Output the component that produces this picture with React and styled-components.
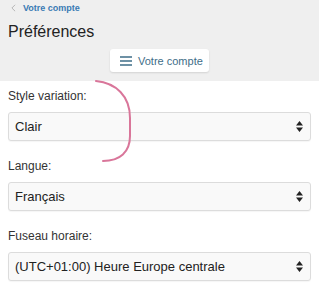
import React from "react";
import styled, { createGlobalStyle } from "styled-components";

const GlobalStyle = createGlobalStyle`
  html, body {
    margin: 0;
    padding: 0;
    background: #ffffff;
    font-family: "Liberation Sans", Arial, sans-serif;
    color: #333333;
  }
`;

const fields = [
  { label: "Style variation:", value: "Clair" },
  { label: "Langue:", value: "Français" },
  { label: "Fuseau horaire:", value: "(UTC+01:00) Heure Europe centrale" },
];

const App = () => {
  return (
    <Page>
      <GlobalStyle />
      <Header>
        <BackLink>
          <Chevron viewBox="0 0 6 10">
            <path d="M5 1 L1 5 L5 9" fill="none" stroke="#b5b5b5" strokeWidth="1.2" />
          </Chevron>
          <BackText>Votre compte</BackText>
        </BackLink>
        <Title>Préférences</Title>
        <ButtonRow>
          <MenuButton>
            <svg width="12" height="10" viewBox="0 0 12 10">
              <path d="M0 1 H12 M0 5 H12 M0 9 H12" stroke="#3e6d88" strokeWidth="1.5" />
            </svg>
            Votre compte
          </MenuButton>
        </ButtonRow>
      </Header>
      <Content>
        {fields.map((field) => (
          <Field key={field.label}>
            <Label>{field.label}</Label>
            <Select>
              <span>{field.value}</span>
              <svg width="7" height="11" viewBox="0 0 7 11">
                <path d="M3.5 0 L7 4.5 H0 Z M3.5 11 L7 6.5 H0 Z" fill="#222" />
              </svg>
            </Select>
          </Field>
        ))}
        <Scribble viewBox="0 0 50 90">
          <path
            d="M4 1 C 24 3, 38 16, 38 38 L 38 56 C 38 72, 28 81, 11 81"
            fill="none"
            stroke="#d9769a"
            strokeWidth="2"
            strokeLinecap="round"
          />
        </Scribble>
      </Content>
    </Page>
  );
};

const Page = styled.div`
  width: 319px;
  height: 300px;
  overflow: hidden;
`;

const Header = styled.div`
  background: #efefef;
  padding: 3px 8px 9px;
  height: 69px;
`;

const BackLink = styled.div`
  display: flex;
  align-items: center;
  gap: 7px;
  padding-left: 3px;
  height: 9px;
`;

const Chevron = styled.svg`
  width: 5px;
  height: 8px;
`;

const BackText = styled.span`
  font-size: 9px;
  font-weight: bold;
  color: #3a7bb4;
`;

const Title = styled.h1`
  margin: 10px 0 0;
  font-size: 16px;
  font-weight: normal;
  line-height: 19px;
  color: #222;
`;

const ButtonRow = styled.div`
  display: flex;
  justify-content: center;
  margin-top: 8px;
`;

const MenuButton = styled.div`
  display: flex;
  align-items: center;
  gap: 6px;
  height: 23px;
  width: 99px;
  box-sizing: border-box;
  padding-left: 10px;
  background: #ffffff;
  border-radius: 3px;
  box-shadow: 0 1px 2px rgba(0, 0, 0, 0.12);
  font-size: 11px;
  color: #3e6d88;
`;

const Content = styled.div`
  position: relative;
  padding: 5px 8px 0;
  display: flex;
  flex-direction: column;
  gap: 15px;
`;

const Field = styled.div`
  display: flex;
  flex-direction: column;
  gap: 6px;
`;

const Label = styled.div`
  font-size: 12px;
  line-height: 20px;
  color: #333;
`;

const Select = styled.div`
  height: 29px;
  box-sizing: border-box;
  display: flex;
  align-items: center;
  justify-content: space-between;
  padding: 0 7px 0 6px;
  background: #f9f9f9;
  border: 1px solid #dcdcdc;
  border-radius: 3px;
  box-shadow: 0 1px 1px rgba(0, 0, 0, 0.04);
  font-size: 13px;
  color: #222;
`;

const Scribble = styled.svg`
  position: absolute;
  left: 92px;
  top: -1px;
  width: 50px;
  height: 90px;
`;

export default App;
